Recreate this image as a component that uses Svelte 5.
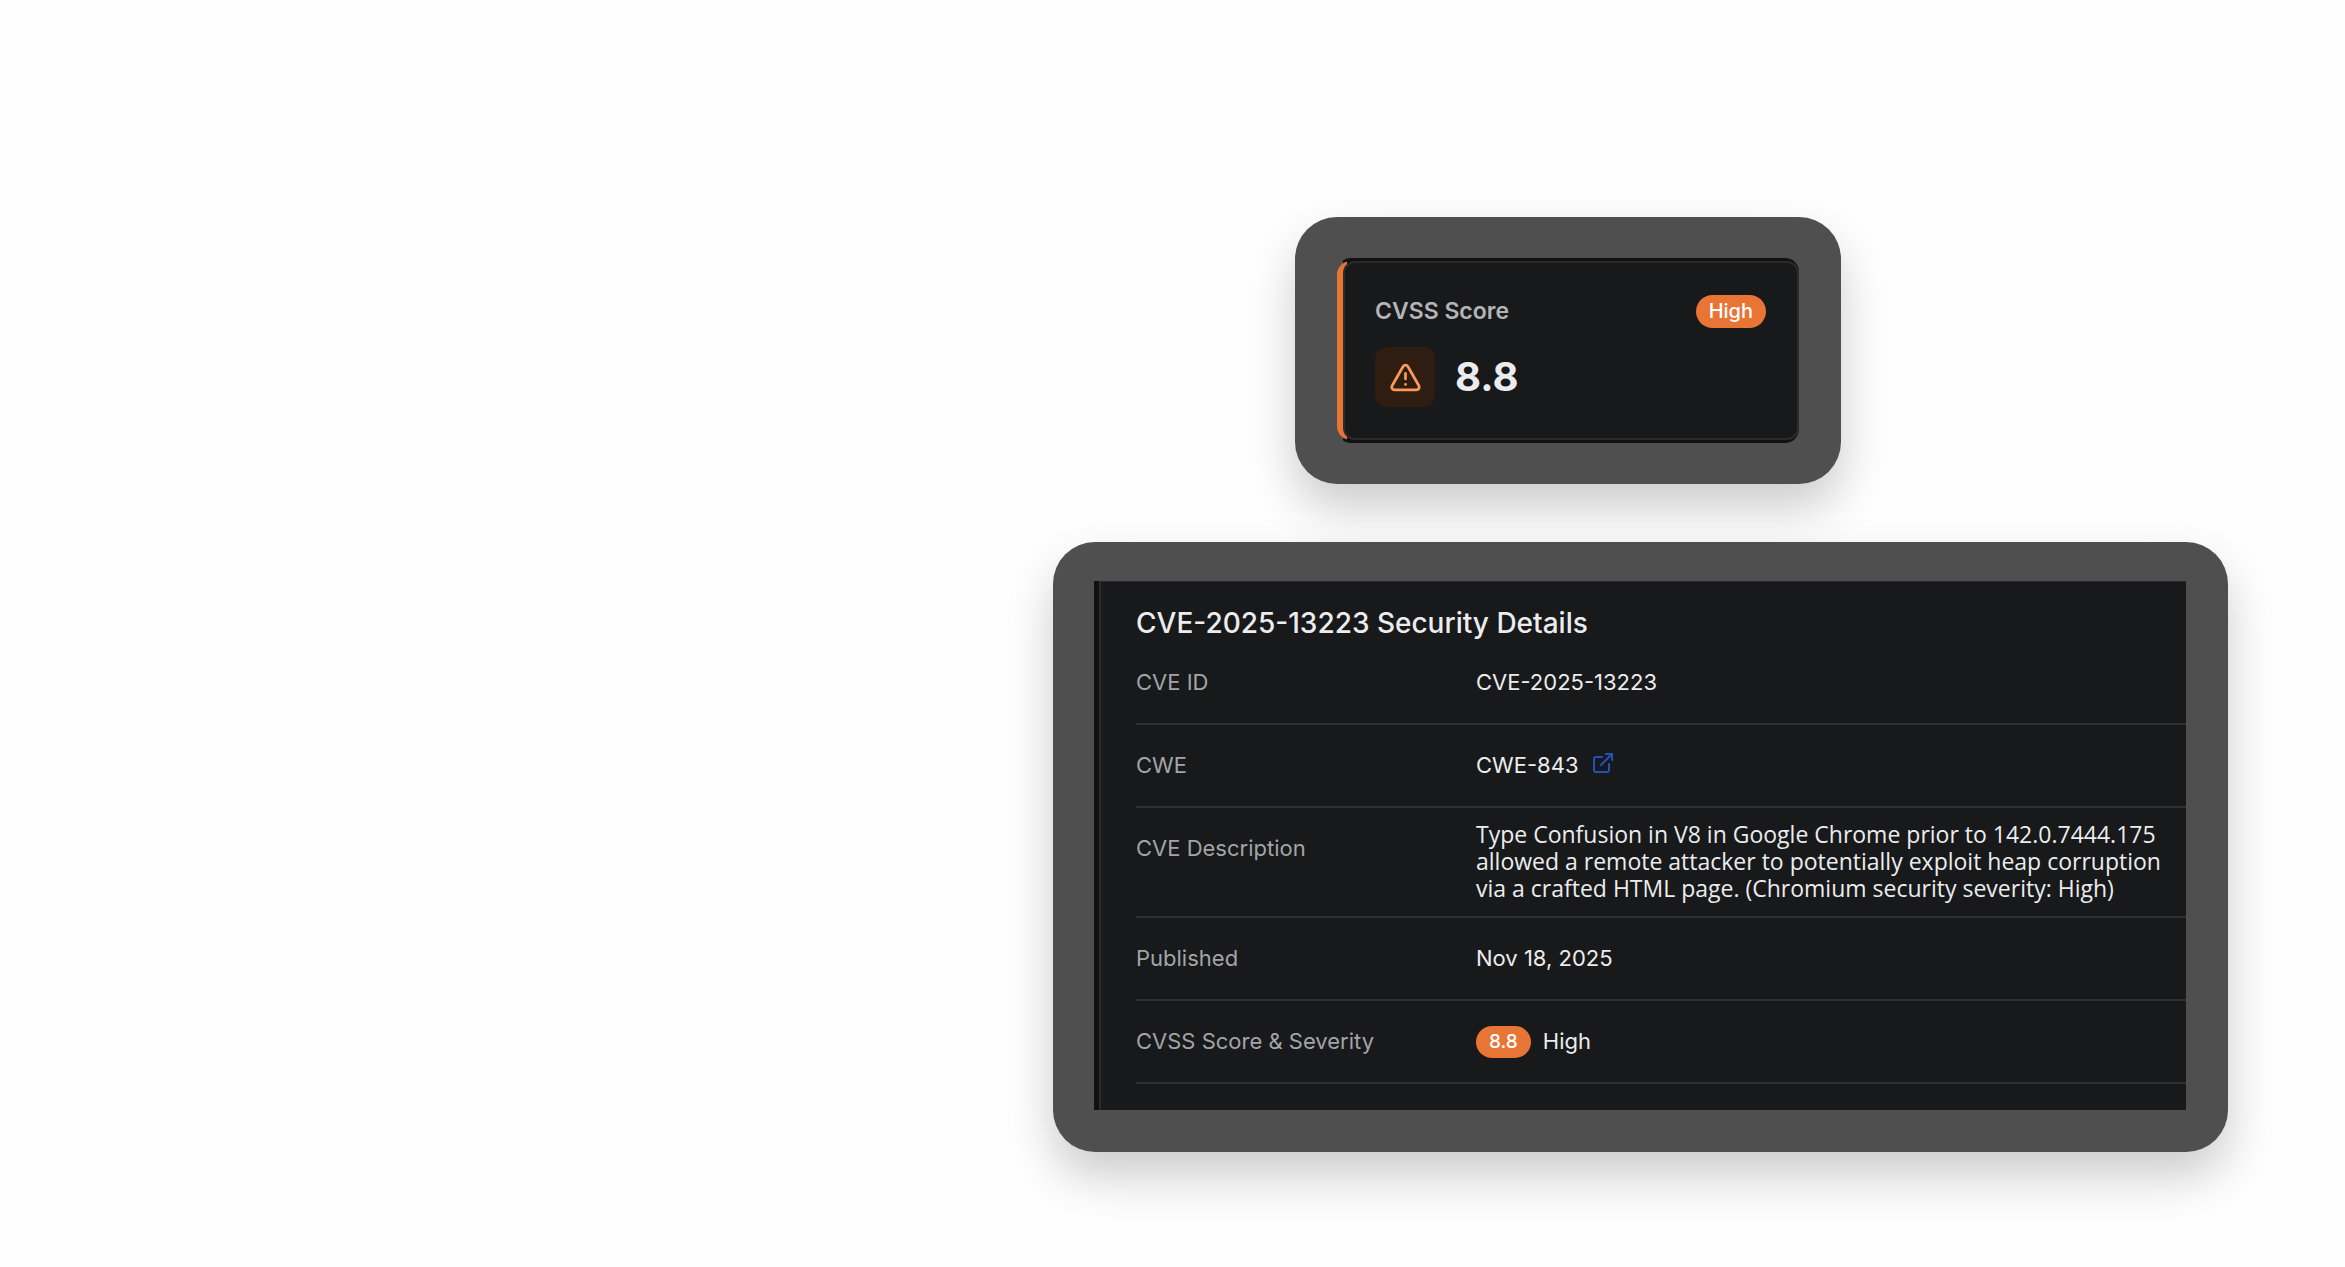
<script lang="ts">
	interface Detail {
		label: string;
		value: string;
		kind?: 'link' | 'description' | 'score';
	}

	const score = '8.8';
	const severity = 'High';

	const details: Detail[] = [
		{ label: 'CVE ID', value: 'CVE-2025-13223' },
		{ label: 'CWE', value: 'CWE-843', kind: 'link' },
		{
			label: 'CVE Description',
			value:
				'Type Confusion in V8 in Google Chrome prior to 142.0.7444.175 allowed a remote attacker to potentially exploit heap corruption via a crafted HTML page. (Chromium security severity: High)',
			kind: 'description'
		},
		{ label: 'Published', value: 'Nov 18, 2025' },
		{ label: 'CVSS Score & Severity', value: severity, kind: 'score' }
	];
</script>

<main>
	<section class="frame score-frame">
		<div class="score-backdrop">
			<div class="score-accent">
				<div class="score-card">
					<header>
						<h2>CVSS Score</h2>
						<span class="badge">{severity}</span>
					</header>
					<div class="score-row">
						<span class="score-icon">
							<svg viewBox="0 0 24 24" aria-hidden="true">
								<path d="m21.73 18-8-14a2 2 0 0 0-3.48 0l-8 14A2 2 0 0 0 4 21h16a2 2 0 0 0 1.73-3" />
								<path d="M12 9v4" />
								<path d="M12 17h.01" />
							</svg>
						</span>
						<strong>{score}</strong>
					</div>
				</div>
			</div>
		</div>
	</section>

	<section class="frame details-frame">
		<div class="details-backdrop">
			<div class="details-card">
				<h1>CVE-2025-13223 Security Details</h1>
				<dl>
					{#each details as detail (detail.label)}
						<div class="row">
							<dt>{detail.label}</dt>
							<dd class:description={detail.kind === 'description'}>
								{#if detail.kind === 'link'}
									<a href="#cwe-843">
										{detail.value}
										<svg class="external" viewBox="0 0 24 24" aria-hidden="true">
											<path d="M15 3h6v6" />
											<path d="M10 14 21 3" />
											<path d="M18 13v6a2 2 0 0 1-2 2H5a2 2 0 0 1-2-2V8a2 2 0 0 1 2-2h6" />
										</svg>
									</a>
								{:else if detail.kind === 'score'}
									<span class="badge small">{score}</span>
									<span>{detail.value}</span>
								{:else}
									<span>{detail.value}</span>
								{/if}
							</dd>
						</div>
					{/each}
				</dl>
			</div>
		</div>
	</section>
</main>

<style>
	:global(body) {
		background: #fefefe;
	}

	main {
		display: flex;
		flex-direction: column;
		gap: 58px;
		max-width: 1175px;
		margin: 0 117px 0 auto;
		padding: 217px 0 115px;
		font-family: Inter, 'Liberation Sans', sans-serif;
		color: #ececee;
	}

	h1,
	h2,
	dl,
	dd {
		margin: 0;
	}

	svg {
		fill: none;
		stroke: currentColor;
		stroke-width: 2;
		stroke-linecap: round;
		stroke-linejoin: round;
	}

	.frame {
		box-sizing: border-box;
		background: #4f4f4f;
		border-radius: 42px;
		box-shadow: 0 24px 48px rgba(0, 0, 0, 0.2);
	}

	/* Score card */
	.score-frame {
		width: 100%;
		max-width: 546px;
		margin-left: 242px;
		padding: 41px 42px;
	}

	.score-backdrop {
		padding: 3px 0;
		background: linear-gradient(90deg, transparent 6px, #111112 6px);
		border-radius: 14px;
	}

	.score-accent {
		padding-left: 6px;
		background: linear-gradient(90deg, #e87435 10px, transparent 10px);
		border-radius: 14px;
	}

	.score-card {
		padding: 32px 31px 31px 30px;
		background: #18191a;
		border: 2px solid #2d2b2a;
		border-radius: 12px;
	}

	.score-card header {
		display: flex;
		align-items: center;
		justify-content: space-between;
		margin-bottom: 19px;
	}

	h2 {
		font-size: 23px;
		font-weight: 600;
		line-height: 33px;
		color: #b3b4b9;
	}

	.badge {
		padding: 0 13px;
		font-size: 20px;
		font-weight: 500;
		line-height: 33px;
		color: #fff;
		background: #e87435;
		border-radius: 17px;
	}

	.badge.small {
		font-size: 19px;
		line-height: 32px;
	}

	.score-row {
		display: flex;
		align-items: center;
		gap: 20px;
	}

	.score-icon {
		display: flex;
		align-items: center;
		justify-content: center;
		width: 60px;
		height: 60px;
		color: #fb9a58;
		background: #2e1d10;
		border-radius: 12px;
	}

	.score-icon svg {
		width: 33px;
		height: 33px;
	}

	strong {
		font-size: 40px;
		font-weight: 700;
		line-height: 60px;
	}

	/* Details card */
	.details-frame {
		padding: 39px 42px 42px 41px;
	}

	.details-backdrop {
		padding-left: 5px;
		background: #111112;
	}

	.details-card {
		padding: 24px 0 26px 35px;
		background: #18191a;
		border-top: 1px solid #2a2b2c;
		border-left: 2px solid #2a2b2c;
	}

	h1 {
		margin-bottom: 2px;
		font-size: 28px;
		font-weight: 500;
		line-height: 34px;
	}

	.row {
		display: grid;
		grid-template-columns: 340px 1fr;
		border-bottom: 2px solid #303133;
	}

	dt,
	dd {
		font-size: 22px;
		line-height: 81px;
	}

	dt {
		color: #a3a4a8;
	}

	dd {
		display: flex;
		align-items: center;
		gap: 12px;
	}

	dd.description {
		padding: 13px 24px 14px 0;
		font-family: 'Open Sans', 'Noto Sans', sans-serif;
		font-size: 23px;
		line-height: 27px;
	}

	a {
		display: flex;
		align-items: center;
		gap: 12px;
		color: inherit;
		text-decoration: none;
	}

	.external {
		width: 24px;
		height: 24px;
		margin-bottom: 6px;
		color: #2350c0;
	}
</style>
